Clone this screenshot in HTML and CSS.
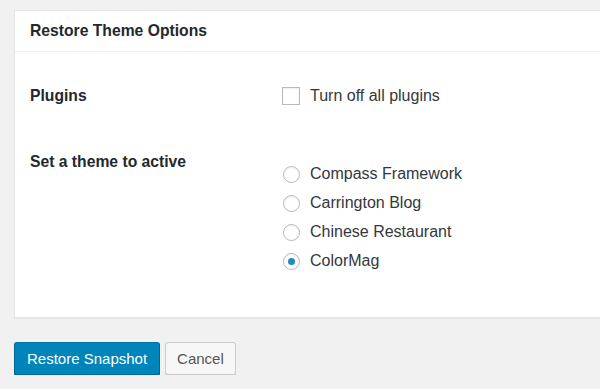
FILE: index.html
```html
<!DOCTYPE html>
<html>
<head>
<meta charset="utf-8">
<link rel="stylesheet" href="styles.css">
</head>
<body>
<div class="wrap">
  <div class="panel">
    <div class="panel-head">Restore Theme Options</div>
    <div class="panel-body">
      <div class="row">
        <div class="label">Plugins</div>
        <div class="field">
          <label class="opt"><span class="check"></span>Turn off all plugins</label>
        </div>
      </div>
      <div class="row row-themes">
        <div class="label">Set a theme to active</div>
        <div class="field radios">
          <label class="opt"><span class="radio"></span>Compass Framework</label>
          <label class="opt"><span class="radio"></span>Carrington Blog</label>
          <label class="opt"><span class="radio"></span>Chinese Restaurant</label>
          <label class="opt"><span class="radio checked"></span>ColorMag</label>
        </div>
      </div>
    </div>
  </div>
  <div class="actions">
    <button class="btn btn-primary">Restore Snapshot</button>
    <button class="btn">Cancel</button>
  </div>
</div>
</body>
</html>
```
FILE: styles.css
```css
html, body {
  margin: 0;
  padding: 0;
  background: #f1f1f1;
}
body {
  font-family: "Liberation Sans", Arial, sans-serif;
  color: #444;
}
.wrap {
  padding: 10px 0 0 14px;
}
.panel {
  background: #fff;
  border: 1px solid #e5e5e5;
  border-right: none;
  box-shadow: 0 1px 1px rgba(0,0,0,0.04);
}
.panel-head {
  height: 40px;
  line-height: 40px;
  padding: 0 15px;
  border-bottom: 1px solid #eee;
  font-size: 15.7px;
  font-weight: bold;
  color: #23282d;
}
.panel-body {
  padding: 34px 15px 46px;
  display: flex;
  flex-direction: column;
  gap: 46px;
}
.row {
  display: flex;
}
.label {
  width: 252px;
  flex: none;
  font-size: 15.7px;
  font-weight: bold;
  line-height: 20px;
  color: #23282d;
}
.field {
  display: flex;
  flex-direction: column;
}
.radios {
  margin-top: 12px;
  gap: 9px;
}
.opt {
  display: flex;
  align-items: center;
  font-size: 16px;
  line-height: 20px;
  color: #32373c;
}
.check {
  width: 16px;
  height: 16px;
  border: 1px solid #b4b9be;
  background: #fff;
  box-shadow: inset 0 1px 2px rgba(0,0,0,0.07);
  margin-right: 10px;
  flex: none;
}
.radio {
  width: 15px;
  height: 15px;
  border: 1px solid #b4b9be;
  border-radius: 50%;
  background: #fff;
  box-shadow: inset 0 1px 2px rgba(0,0,0,0.07);
  margin: 0 10px 0 1px;
  flex: none;
  display: flex;
  align-items: center;
  justify-content: center;
}
.radio.checked::after {
  content: "";
  width: 7px;
  height: 7px;
  border-radius: 50%;
  background: #1e8cbe;
}
.actions {
  margin-top: 24px;
  display: flex;
  gap: 5px;
}
.btn {
  height: 33px;
  padding: 0 11px;
  font-family: "Liberation Sans", Arial, sans-serif;
  font-size: 15px;
  border: 1px solid #ccc;
  border-radius: 3px;
  background: #f7f7f7;
  color: #555;
  box-shadow: 0 1px 0 #ccc;
}
.btn-primary {
  padding: 0 12px;
  background: #0085ba;
  border-color: #0073aa #006799 #006799;
  box-shadow: 0 1px 0 #006799;
  color: #fff;
}
```
